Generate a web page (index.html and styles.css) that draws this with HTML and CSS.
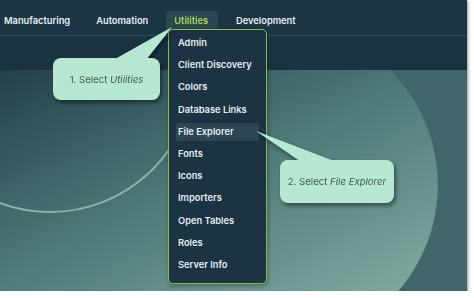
FILE: index.html
```html
<!DOCTYPE html>
<html lang="en">

<head>
    <meta charset="UTF-8">
    <title>Utilities menu</title>
    <link rel="stylesheet" href="styles.css">
</head>

<body>
    <div class="shot">
        <div class="nav">
            <span class="nav-item">Manufacturing</span>
            <span class="nav-item">Automation</span>
            <span class="nav-item active">Utilities</span>
            <span class="nav-item">Development</span>
        </div>
        <div class="subbar"></div>
        <div class="hero">
            <div class="ring"></div>
        </div>

        <ul class="dropdown">
            <li>Admin</li>
            <li>Client Discovery</li>
            <li>Colors</li>
            <li>Database Links</li>
            <li class="hover">File Explorer</li>
            <li>Fonts</li>
            <li>Icons</li>
            <li>Importers</li>
            <li>Open Tables</li>
            <li>Roles</li>
            <li>Server Info</li>
        </ul>

        <div class="callout callout-1"><span>1. Select <i>Utilities</i></span></div>
        <div class="callout callout-2"><span>2. Select <i>File Explorer</i></span></div>
    </div>
</body>

</html>
```

FILE: styles.css
```css
* {
    padding: 0;
    margin: 0;
    box-sizing: border-box;
}

body {
    background: #fff;
    font-family: Inter, "Open Sans", sans-serif;
}

.shot {
    position: relative;
    width: 467px;
    height: 291px;
    overflow: hidden;
    display: flex;
    flex-direction: column;
    background: #1c3545;
    box-shadow: 1px 1px 3px rgba(0, 0, 0, 0.45);
}

.nav {
    height: 36px;
    display: flex;
    align-items: center;
    gap: 10px;
    padding-top: 5px;
    border-bottom: 1px solid #2f4d59;
    background: #1c3545;
}

.nav-item {
    padding: 4px 8px;
    border-radius: 4px;
    color: #e9eef1;
    font-size: 9.3px;
    font-weight: 600;
    line-height: 11px;
}

.nav-item:first-child {
    padding-left: 4px;
}

.nav-item.active {
    padding-right: 10px;
    color: #a8d84e;
    background: #2b4553;
}

.subbar {
    height: 34px;
    background: #1a3343;
}

.hero {
    flex: 1;
    position: relative;
    overflow: hidden;
    background:
        radial-gradient(circle 162px at 0 115px, transparent 161px, #41666a 162.5px) 276px 0 / 200px 100% no-repeat,
        linear-gradient(to bottom right, #233f4b 0%, #4c7876 45%, #85afa5 100%);
}

.ring {
    position: absolute;
    left: -96px;
    top: -149px;
    width: 292px;
    height: 292px;
    border: 2px solid #98c4b7;
    border-radius: 50%;
    opacity: 0.8;
}

/* menu */
.dropdown {
    position: absolute;
    left: 168px;
    top: 29px;
    width: 99px;
    height: 255px;
    padding: 4px 7px 0 7px;
    list-style: none;
    background: #1b3343;
    border: 1px solid #86bd46;
    border-radius: 5px;
    box-shadow: 1px 2px 4px rgba(0, 0, 0, 0.3);
}

.dropdown li {
    height: 18px;
    margin-bottom: 4.2px;
    padding-left: 2px;
    border-radius: 3px;
    color: #e6ecef;
    font-size: 9.3px;
    font-weight: 600;
    line-height: 18px;
    white-space: nowrap;
}

.dropdown li.hover {
    background: #2c4654;
}

/* annotations */
.callout {
    position: absolute;
    background: #b7e9d2;
    color: #3f5c58;
    border-radius: 8px;
    font-size: 9.6px;
    font-weight: 400;
    display: flex;
    align-items: center;
    justify-content: center;
    filter: drop-shadow(2px 3px 2px rgba(0, 0, 0, 0.45));
}

.callout::before {
    content: "";
    position: absolute;
    background: #b7e9d2;
}

.callout-1 {
    left: 53px;
    top: 58px;
    width: 107px;
    height: 42px;
}

.callout-1::before {
    left: 62px;
    top: -31px;
    width: 57px;
    height: 32px;
    clip-path: polygon(0 100%, 56% 100%, 100% 0);
}

.callout-2 {
    left: 280px;
    top: 160px;
    width: 114px;
    height: 43px;
}

.callout-2::before {
    left: -24px;
    top: -29px;
    width: 78px;
    height: 30px;
    clip-path: polygon(0 0, 56% 100%, 100% 100%);
}
```
